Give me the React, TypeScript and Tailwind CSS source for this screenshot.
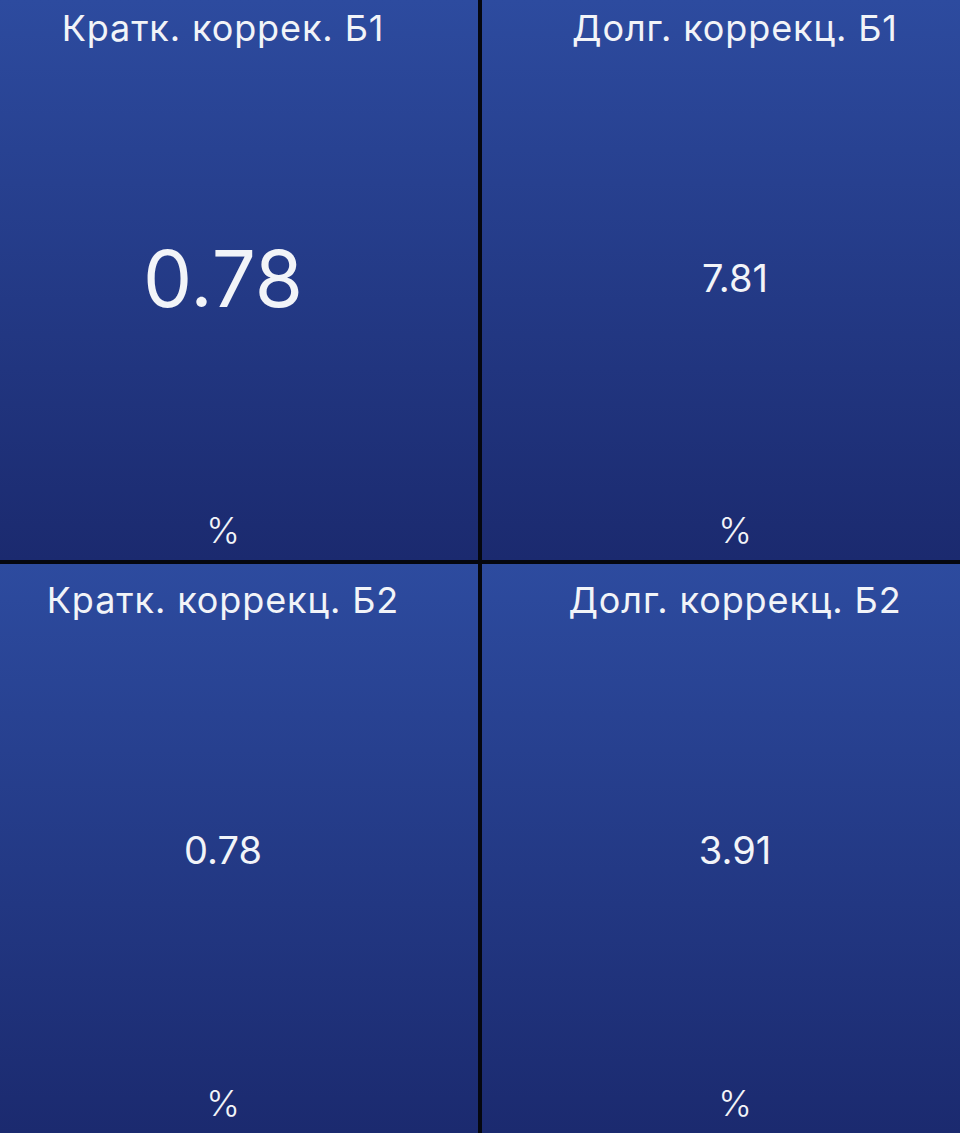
const font = { fontFamily: 'Inter, "Noto Sans", sans-serif' }

type Gauge = {
  title: string
  value: string
  unit: string
  big?: boolean
}

const gauges: Gauge[] = [
  { title: 'Кратк. коррек. Б1', value: '0.78', unit: '%', big: true },
  { title: 'Долг. коррекц. Б1', value: '7.81', unit: '%' },
  { title: 'Кратк. коррекц. Б2', value: '0.78', unit: '%' },
  { title: 'Долг. коррекц. Б2', value: '3.91', unit: '%' }
]

const Cell = ({ g, idx }: { g: Gauge; idx: number }) => {
  const left = idx % 2 === 0
  const lower = idx > 1
  return (
    <div
      className={`flex flex-col bg-gradient-to-b from-[#2d4b9f] to-[#1b2a6f] text-[#f2f4f8] ${
        left ? 'pr-[32px]' : 'pl-[28px]'
      } ${lower ? 'pt-[8px]' : ''}`}>
      <div className="h-[56px] flex items-center justify-center text-[36px] tracking-[0.9px]">
        {g.title}
      </div>
      <div
        className={`flex-1 flex items-center justify-center ${
          g.big ? 'text-[78px]' : 'text-[38px]'
        }`}>
        {g.value}
      </div>
      <div className="h-[60px] flex items-center justify-center text-[36px] font-light">
        {g.unit}
      </div>
    </div>
  )
}

export default function App() {
  return (
    <div
      style={font}
      className="w-[960px] h-[1133px] bg-[#05070f] grid grid-cols-[478px_1fr] grid-rows-[560px_1fr] gap-[4px] overflow-hidden">
      {gauges.map((g, i) => (
        <Cell key={i} g={g} idx={i} />
      ))}
    </div>
  )
}
